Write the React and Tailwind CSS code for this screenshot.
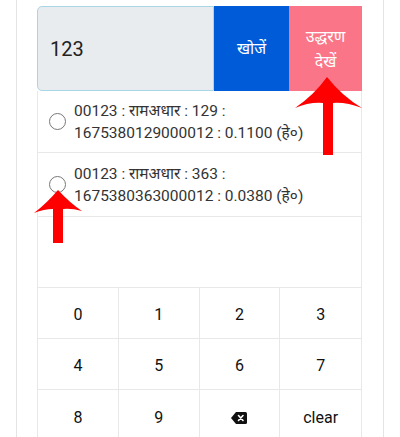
import React from "react";

const results = [
  { line1: "00123 : रामअधार : 129 :", line2: "1675380129000012 : 0.1100 (हे०)", h: "h-[62px]" },
  { line1: "00123 : रामअधार : 363 :", line2: "1675380363000012 : 0.0380 (हे०)", h: "h-[64px]" },
];

const keys = ["0", "1", "2", "3", "4", "5", "6", "7", "8", "9", "back", "clear"];

function BackspaceIcon() {
  return (
    <svg width="16" height="12" viewBox="0 0 16 12">
      <path d="M5 0 H14.5 A1.5 1.5 0 0 1 16 1.5 V10.5 A1.5 1.5 0 0 1 14.5 12 H5 L0 6 Z" fill="#111" />
      <path d="M7.5 3.5 L12 8.5 M12 3.5 L7.5 8.5" stroke="#fff" strokeWidth="1.6" strokeLinecap="round" />
    </svg>
  );
}

function Arrows() {
  return (
    <svg className="absolute inset-0 pointer-events-none" width="400" height="437" viewBox="0 0 400 437">
      <path
        d="M327 77 Q342 96 362 108 Q346 102 333 103 L333 155 L323 155 L323 103 Q309 102 295 108 Q314 95 327 77 Z"
        fill="#ff0000"
      />
      <path
        d="M58 190 Q70 203 82 211 Q71 208 63 209 L63 243 L53 243 L53 209 Q44 209 34 213 Q47 203 58 190 Z"
        fill="#ff0000"
      />
    </svg>
  );
}

export default function App() {
  return (
    <div
      className="relative w-[400px] h-[437px] overflow-hidden bg-white"
      style={{ fontFamily: 'Roboto, "Noto Sans", sans-serif' }}
    >
      <div className="ml-4 w-[368px] h-full border-x border-[#e4e4e4] pl-5 pt-1.5">
        <div className="w-[325px]">
          {/* search bar */}
          <div className="flex h-[85px]">
            <div className="w-[177px] h-full bg-[#e8ecef] border border-[#a9d6e5] rounded-l-[5px] flex items-center pl-3 text-[20px] text-[#222]">
              123
            </div>
            <button className="w-[75px] h-full bg-[#005bd9] text-white text-[16px]">खोजें</button>
            <button className="w-[73px] h-full bg-[#fa7588] text-white text-[16px] leading-[25px] flex flex-col items-center justify-center">
              <span>उद्धरण</span>
              <span>देखें</span>
            </button>
          </div>

          {/* results */}
          <div className="border-x border-[#e8e8e8]">
            {results.map((r, i) => (
              <div key={i} className={`${r.h} flex items-center border-b border-[#e8e8e8] pl-[11px]`}>
                <span className="w-[17px] h-[17px] rounded-full border border-[#777] shrink-0" />
                <div className="ml-2 text-[15.5px] leading-[22px] text-[#333]">
                  <div>{r.line1}</div>
                  <div>{r.line2}</div>
                </div>
              </div>
            ))}
            <div className="h-[70px]" />

            {/* keypad */}
            <div className="grid grid-cols-4 border-t border-[#e8e8e8]">
              {keys.map((k, i) => (
                <div
                  key={k}
                  className={`flex items-center justify-center pt-1 text-[16px] text-[#111] ${
                    i < 8 ? "h-[51px] border-b border-[#e8e8e8]" : "h-[51px]"
                  } ${i % 4 !== 3 ? "border-r border-[#e8e8e8]" : ""}`}
                >
                  {k === "back" ? <BackspaceIcon /> : k}
                </div>
              ))}
            </div>
          </div>
        </div>
      </div>
      <Arrows />
    </div>
  );
}
